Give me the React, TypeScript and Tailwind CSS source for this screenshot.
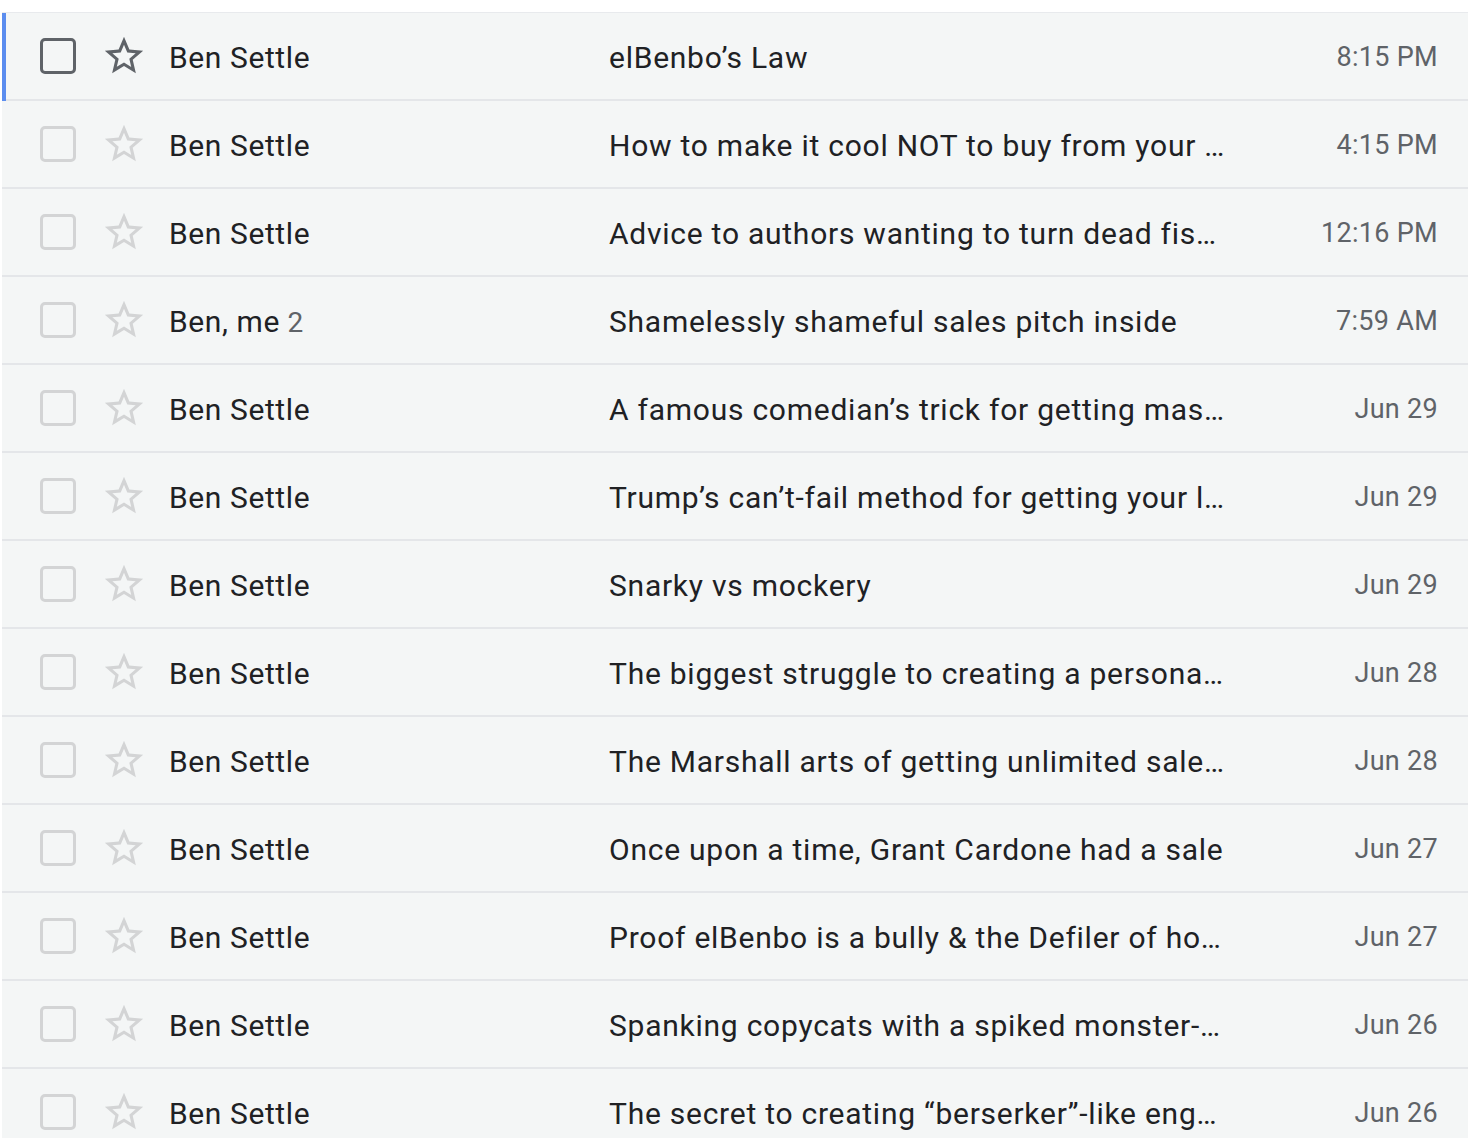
import React from "react";

type Mail = {
  from: string;
  count?: number;
  subject: string;
  time: string;
};

// subjects are shown as Gmail clipped them in the list view
const mails: Mail[] = [
  { from: "Ben Settle", subject: "elBenbo’s Law", time: "8:15 PM" },
  { from: "Ben Settle", subject: "How to make it cool NOT to buy from your …", time: "4:15 PM" },
  { from: "Ben Settle", subject: "Advice to authors wanting to turn dead fis…", time: "12:16 PM" },
  { from: "Ben, me", count: 2, subject: "Shamelessly shameful sales pitch inside", time: "7:59 AM" },
  { from: "Ben Settle", subject: "A famous comedian’s trick for getting mas…", time: "Jun 29" },
  { from: "Ben Settle", subject: "Trump’s can’t-fail method for getting your l…", time: "Jun 29" },
  { from: "Ben Settle", subject: "Snarky vs mockery", time: "Jun 29" },
  { from: "Ben Settle", subject: "The biggest struggle to creating a persona…", time: "Jun 28" },
  { from: "Ben Settle", subject: "The Marshall arts of getting unlimited sale…", time: "Jun 28" },
  { from: "Ben Settle", subject: "Once upon a time, Grant Cardone had a sale", time: "Jun 27" },
  { from: "Ben Settle", subject: "Proof elBenbo is a bully & the Defiler of ho…", time: "Jun 27" },
  { from: "Ben Settle", subject: "Spanking copycats with a spiked monster-…", time: "Jun 26" },
  { from: "Ben Settle", subject: "The secret to creating “berserker”-like eng…", time: "Jun 26" },
];

function Star({ active }: { active: boolean }) {
  return (
    <svg
      viewBox="0 0 24 24"
      className="w-[46px] h-[46px] shrink-0"
      fill={active ? "#5f6368" : "#d3d4d5"}
    >
      <path d="M22 9.24l-7.19-.62L12 2 9.19 8.63 2 9.24l5.46 4.73L5.82 21 12 17.27 18.18 21l-1.63-7.03L22 9.24zM12 15.4l-3.76 2.27 1-4.28-3.32-2.88 4.38-.38L12 6.1l1.71 4.04 4.38.38-3.32 2.88 1 4.28L12 15.4z" />
    </svg>
  );
}

function Row({ mail, active }: { mail: Mail; active: boolean }) {
  return (
    <div className="relative flex items-center h-[88px] border-b-2 border-[#e4e6e9] bg-[#f4f6f6]">
      {active && <div className="absolute left-0 top-0 bottom-[-2px] w-[4px] bg-[#5b8def]" />}
      <div
        className={
          "ml-[38px] w-[36px] h-[36px] rounded-[5px] border-[3px] shrink-0 " +
          (active ? "border-[#5f6368]" : "border-[#d3d4d5]")
        }
      />
      <div className="ml-[25px]">
        <Star active={active} />
      </div>
      <div className="ml-[22px] pt-[2px] w-[440px] shrink-0 text-[30px] tracking-[0.6px] text-[#202124] whitespace-nowrap">
        {mail.from}
        {mail.count && <span className="text-[#5f6368] text-[28px]"> {mail.count}</span>}
      </div>
      <div className="w-[640px] pt-[2px] shrink-0 text-[30px] tracking-[0.75px] text-[#202124] whitespace-nowrap">
        {mail.subject}
      </div>
      <div className="flex-1 pt-[2px] text-right pr-[30px] text-[27px] tracking-[0.3px] text-[#5f6368] whitespace-nowrap">
        {mail.time}
      </div>
    </div>
  );
}

export default function App() {
  return (
    <div
      className="min-h-screen bg-white pt-[12px] pl-[2px]"
      style={{ fontFamily: "Roboto, 'Noto Sans', sans-serif" }}
    >
      <div className="border-t border-[#e8eaed]">
        {mails.map((m, i) => (
          <Row key={i} mail={m} active={i === 0} />
        ))}
      </div>
    </div>
  );
}
